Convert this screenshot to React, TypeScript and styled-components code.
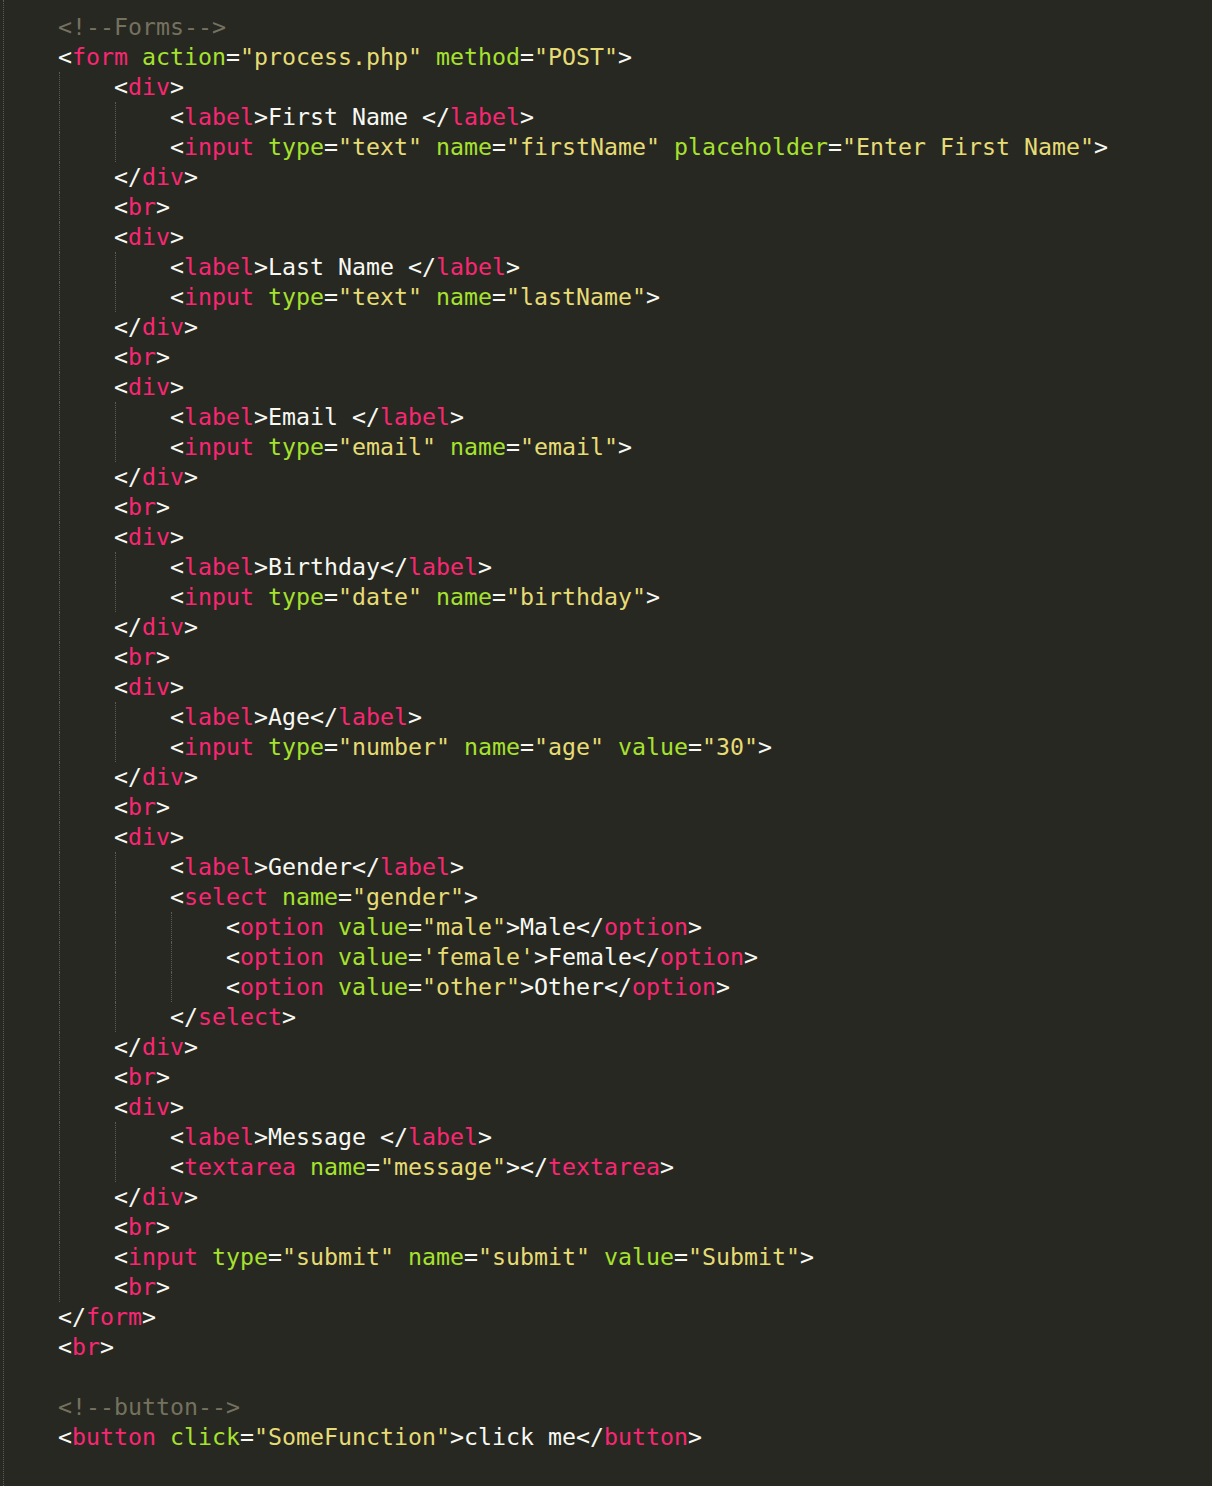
import React from 'react';
import styled, { createGlobalStyle } from 'styled-components';

const Global = createGlobalStyle`
  html, body {
    margin: 0;
    padding: 0;
    background: #272822;
  }
`;

const Editor = styled.div`
  box-sizing: border-box;
  min-height: 100vh;
  margin-left: 3px;
  padding: 12px 0 0 54px;
  border-left: 1px dotted #5c5c54;
  background: #272822;
  font-family: 'DejaVu Sans Mono', 'Liberation Mono', monospace;
  font-size: 23.255px;
  color: #f8f8f2;
`;

const Line = styled.div`
  display: flex;
  align-items: center;
  height: 30px;
  line-height: 30px;
  white-space: pre;
`;

const Indent = styled.span`
  display: inline-block;
  box-sizing: border-box;
  flex: none;
  width: 55px;
  height: 30px;
  margin-left: 1px;
  border-left: 1px dotted #5c5c54;
`;

type Kind = 'p' | 't' | 'a' | 's' | 'x' | 'c';

const colors: Record<Kind, string> = {
  p: '#f8f8f2',
  t: '#f92672',
  a: '#a6e22e',
  s: '#e6db74',
  x: '#f8f8f2',
  c: '#75715e',
};

const Tok = styled.span<{ $kind: Kind }>`
  color: ${(p) => colors[p.$kind]};
`;

type Token = { k: Kind; v: string };

function tokenize(src: string): Token[] {
  if (src.startsWith('<!--')) return [{ k: 'c', v: src }];
  const out: Token[] = [];
  let i = 0;
  let inTag = false;
  while (i < src.length) {
    const rest = src.slice(i);
    let m: RegExpMatchArray | null;
    if (!inTag) {
      m = rest.match(/^<\/?/);
      if (m) {
        out.push({ k: 'p', v: m[0] });
        i += m[0].length;
        const n = src.slice(i).match(/^[a-z]+/);
        if (n) {
          out.push({ k: 't', v: n[0] });
          i += n[0].length;
        }
        inTag = true;
        continue;
      }
      m = rest.match(/^[^<]+/)!;
      out.push({ k: 'x', v: m[0] });
      i += m[0].length;
    } else {
      if ((m = rest.match(/^\s+/))) out.push({ k: 'x', v: m[0] });
      else if ((m = rest.match(/^[a-zA-Z-]+/))) out.push({ k: 'a', v: m[0] });
      else if ((m = rest.match(/^("[^"]*"|'[^']*')/))) out.push({ k: 's', v: m[0] });
      else if ((m = rest.match(/^>/))) {
        out.push({ k: 'p', v: '>' });
        inTag = false;
      } else {
        m = rest.match(/^./)!;
        out.push({ k: 'p', v: m[0] });
      }
      i += m[0].length;
    }
  }
  return out;
}

const source: [number, string][] = [
  [0, '<!--Forms-->'],
  [0, '<form action="process.php" method="POST">'],
  [1, '<div>'],
  [2, '<label>First Name </label>'],
  [2, '<input type="text" name="firstName" placeholder="Enter First Name">'],
  [1, '</div>'],
  [1, '<br>'],
  [1, '<div>'],
  [2, '<label>Last Name </label>'],
  [2, '<input type="text" name="lastName">'],
  [1, '</div>'],
  [1, '<br>'],
  [1, '<div>'],
  [2, '<label>Email </label>'],
  [2, '<input type="email" name="email">'],
  [1, '</div>'],
  [1, '<br>'],
  [1, '<div>'],
  [2, '<label>Birthday</label>'],
  [2, '<input type="date" name="birthday">'],
  [1, '</div>'],
  [1, '<br>'],
  [1, '<div>'],
  [2, '<label>Age</label>'],
  [2, '<input type="number" name="age" value="30">'],
  [1, '</div>'],
  [1, '<br>'],
  [1, '<div>'],
  [2, '<label>Gender</label>'],
  [2, '<select name="gender">'],
  [3, '<option value="male">Male</option>'],
  [3, "<option value='female'>Female</option>"],
  [3, '<option value="other">Other</option>'],
  [2, '</select>'],
  [1, '</div>'],
  [1, '<br>'],
  [1, '<div>'],
  [2, '<label>Message </label>'],
  [2, '<textarea name="message"></textarea>'],
  [1, '</div>'],
  [1, '<br>'],
  [1, '<input type="submit" name="submit" value="Submit">'],
  [1, '<br>'],
  [0, '</form>'],
  [0, '<br>'],
  [0, ''],
  [0, '<!--button-->'],
  [0, '<button click="SomeFunction">click me</button>'],
];

export default function App() {
  return (
    <>
      <Global />
      <Editor>
        {source.map(([level, text], li) => (
          <Line key={li}>
            {Array.from({ length: level }).map((_, g) => (
              <Indent key={g} />
            ))}
            <span>
              {tokenize(text).map((t, ti) => (
                <Tok key={ti} $kind={t.k}>
                  {t.v}
                </Tok>
              ))}
            </span>
          </Line>
        ))}
      </Editor>
    </>
  );
}
